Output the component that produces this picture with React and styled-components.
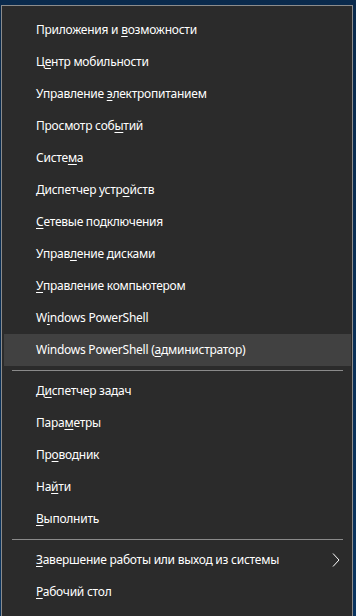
import React from 'react';
import styled, { createGlobalStyle } from 'styled-components';

const GlobalStyle = createGlobalStyle`
  html, body {
    margin: 0;
    padding: 0;
    background: #0a2b50;
    overflow: hidden;
  }
  body {
    font-family: "Noto Sans", "Open Sans", sans-serif;
  }
`;

const Screen = styled.div`
  width: 356px;
  height: 616px;
  padding: 5px 0 0 1px;
  box-sizing: border-box;
  background: linear-gradient(180deg, #0a2a4c 0%, #0b3560 100%);
`;

const Menu = styled.div`
  width: 352px;
  box-sizing: border-box;
  background: #2b2b2b;
  border: 1px solid #8c8c8c;
  padding: 8px 0 8px;
  display: flex;
  flex-direction: column;
`;

const Item = styled.div`
  height: 32px;
  margin: 0 1px 0 2px;
  padding-left: 32px;
  padding-bottom: 1px;
  box-sizing: border-box;
  display: flex;
  align-items: center;
  justify-content: space-between;
  color: #ffffff;
  font-size: 12px;
  letter-spacing: -0.25px;
  background: ${p => (p.$active ? '#414141' : 'transparent')};
  white-space: nowrap;
`;

const Key = styled.span`
  text-decoration: underline;
  text-underline-offset: 2px;
`;

const Separator = styled.div`
  height: 1px;
  margin: 4px 9px 4px 10px;
  background: #8a8a8a;
`;

const Chevron = styled.svg`
  margin-right: 11px;
  width: 8px;
  height: 14px;
`;

const groups = [
  [
    ['Приложения и ', 'в', 'озможности'],
    ['Ц', 'е', 'нтр мобильности'],
    ['Управление ', 'э', 'лектропитанием'],
    ['Просмотр соб', 'ы', 'тий'],
    ['Систе', 'м', 'а'],
    ['Диспетчер устр', 'о', 'йств'],
    ['', 'С', 'етевые подключения'],
    ['Управ', 'л', 'ение дисками'],
    ['', 'У', 'правление компьютером'],
    ['W', 'i', 'ndows PowerShell'],
    ['Windows PowerShell (', 'а', 'дминистратор)', true],
  ],
  [
    ['Д', 'и', 'спетчер задач'],
    ['Пара', 'м', 'етры'],
    ['Пр', 'о', 'водник'],
    ['На', 'й', 'ти'],
    ['', 'В', 'ыполнить'],
  ],
  [
    ['', 'З', 'авершение работы или выход из системы', false, true],
    ['', 'Р', 'абочий стол'],
  ],
];

const App = () => {
  return (
    <Screen>
      <GlobalStyle />
      <Menu>
        {groups.map((group, gi) => (
          <React.Fragment key={gi}>
            {gi > 0 && <Separator />}
            {group.map(([pre, key, post, active, sub]) => (
              <Item key={pre + key + post} $active={active}>
                <span>
                  {pre}
                  <Key>{key}</Key>
                  {post}
                </span>
                {sub && (
                  <Chevron viewBox="0 0 8 14">
                    <polyline points="1,0.5 7,7 1,13.5" fill="none" stroke="#ffffff" strokeWidth="1" />
                  </Chevron>
                )}
              </Item>
            ))}
          </React.Fragment>
        ))}
      </Menu>
    </Screen>
  );
};

export default App;
